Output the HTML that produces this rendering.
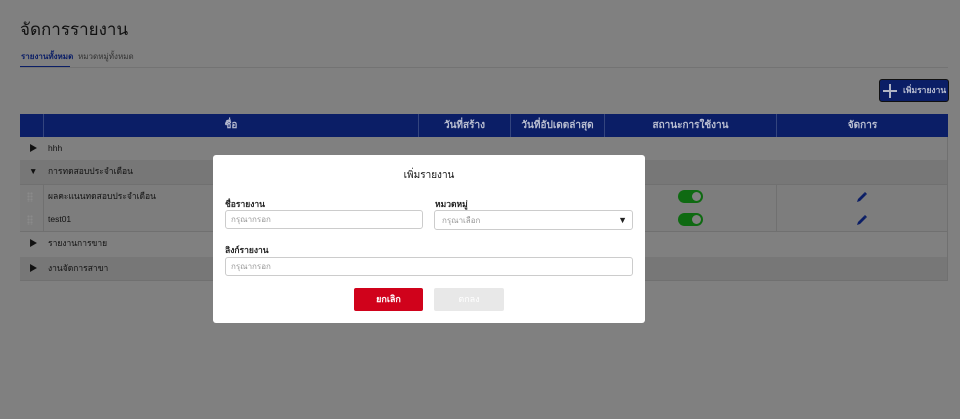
<!DOCTYPE html>
<html><head><meta charset="utf-8"><style>
*{box-sizing:border-box;margin:0;padding:0}
body{width:960px;height:419px;background:#808080;font-family:"Liberation Sans","Noto Sans CJK SC",sans-serif;position:relative;overflow:hidden;color:#111}
.a{position:absolute;white-space:nowrap}
.th{position:absolute;top:114px;height:23px;color:#b8bdd0;font-size:10px;font-weight:bold;text-align:center;line-height:23px;border-left:1px solid #34457e}
.row{position:absolute;left:20px;width:928px;font-size:8.5px;line-height:23px}
.inp{position:absolute;background:#fff;border:1px solid #ccc;border-radius:3px;font-size:8px;color:#999;padding-left:5px;line-height:18px}
.lbl{position:absolute;font-size:8.5px;font-weight:bold;color:#222}
.tog{position:absolute;width:25px;height:13px;border-radius:7px;background:#0f6a12}
.tog:after{content:"";position:absolute;right:2px;top:2px;width:9px;height:9px;border-radius:50%;background:#808080}
.dots{position:absolute;left:7px;top:7px;width:6px;height:10px;background:radial-gradient(circle,#8a8a8a 1px,transparent 1.2px) 0 0/3px 3px}
</style></head><body>
<div class="a" style="left:20px;top:16px;font-size:17px;color:#111">จัดการรายงาน</div>
<div class="a" style="left:21px;top:50px;font-size:8px;font-weight:bold;color:#0b1e66">รายงานทั้งหมด</div>
<div class="a" style="left:78px;top:50px;font-size:8px;color:#333">หมวดหมู่ทั้งหมด</div>
<div class="a" style="left:20px;top:66px;width:50px;height:2px;background:#0b1e66"></div>
<div class="a" style="left:20px;top:67px;width:928px;height:1px;background:#737373"></div>
<div class="a" style="left:879px;top:79px;width:70px;height:23px;background:#0b1e66;border:1px solid #111;border-radius:3px;color:#b8bdd0;font-size:8.5px;font-weight:bold;line-height:21px;padding-left:23px">เพิ่มรายงาน</div>
<svg class="a" style="left:882px;top:83px" width="16" height="16"><path d="M8 1v14M1 8h14" stroke="#b0b4c4" stroke-width="2"/></svg>
<div class="a" style="left:20px;top:114px;width:928px;height:23px;background:#0b1e66"></div>
<div class="th" style="left:43px;width:375px">ชื่อ</div>
<div class="th" style="left:418px;width:92px">วันที่สร้าง</div>
<div class="th" style="left:510px;width:94px">วันที่อัปเดตล่าสุด</div>
<div class="th" style="left:604px;width:172px">สถานะการใช้งาน</div>
<div class="th" style="left:776px;width:172px">จัดการ</div>
<div class="row" style="top:137px;height:23px;background:#808080"><span style="position:absolute;left:9px">▶</span><span style="position:absolute;left:28px">hhh</span></div>
<div class="row" style="top:160px;height:24px;background:#777"><span style="position:absolute;left:9px">▼</span><span style="position:absolute;left:28px">การทดสอบประจำเดือน</span></div>
<div class="row" style="top:184px;height:24px;background:#7d7d7d;border-top:1px solid #707070"><span class="dots"></span><span style="position:absolute;left:28px">ผลคะแนนทดสอบประจำเดือน</span></div>
<div class="row" style="top:208px;height:24px;background:#7d7d7d;border-bottom:1px solid #707070"><span class="dots"></span><span style="position:absolute;left:28px">test01</span></div>
<div class="a" style="left:43px;top:184px;width:1px;height:48px;background:#707070"></div>
<div class="a" style="left:776px;top:184px;width:1px;height:48px;background:#707070"></div>
<div class="tog" style="left:678px;top:190px"></div>
<div class="tog" style="left:678px;top:213px"></div>
<svg class="a" style="left:856px;top:191px" width="12" height="12"><path d="M1 11l1-3 6-6 2 2-6 6z" fill="#0b1e66"/><path d="M9 1l2 2-1 1-2-2z" fill="#0b1e66"/></svg>
<svg class="a" style="left:856px;top:214px" width="12" height="12"><path d="M1 11l1-3 6-6 2 2-6 6z" fill="#0b1e66"/><path d="M9 1l2 2-1 1-2-2z" fill="#0b1e66"/></svg>
<div class="row" style="top:232px;height:25px;background:#808080"><span style="position:absolute;left:9px">▶</span><span style="position:absolute;left:28px">รายงานการขาย</span></div>
<div class="row" style="top:257px;height:24px;background:#777;border-bottom:1px solid #707070"><span style="position:absolute;left:9px">▶</span><span style="position:absolute;left:28px">งานจัดการสาขา</span></div>
<div class="a" style="left:947px;top:137px;width:1px;height:144px;background:#707070"></div>
<div class="a" style="left:213px;top:155px;width:432px;height:168px;background:#fff;border-radius:3px"></div>
<div class="a" style="left:213px;top:168px;width:432px;text-align:center;font-size:10px">เพิ่มรายงาน</div>
<div class="lbl" style="left:225px;top:197px">ชื่อรายงาน</div>
<div class="lbl" style="left:435px;top:197px">หมวดหมู่</div>
<div class="inp" style="left:225px;top:210px;width:198px;height:19px">กรุณากรอก</div>
<div class="inp" style="left:434px;top:210px;width:199px;height:20px;padding-left:7px;line-height:19px">กรุณาเลือก<span style="position:absolute;right:5px;color:#222;font-size:9px">▼</span></div>
<div class="lbl" style="left:225px;top:243px">ลิงก์รายงาน</div>
<div class="inp" style="left:225px;top:257px;width:408px;height:19px">กรุณากรอก</div>
<div class="a" style="left:354px;top:288px;width:69px;height:23px;background:#d0021b;border-radius:2px;color:#fff;font-size:9px;font-weight:bold;text-align:center;line-height:23px">ยกเลิก</div>
<div class="a" style="left:434px;top:288px;width:70px;height:23px;background:#e8e8e8;border-radius:2px;color:#fff;font-size:9px;text-align:center;line-height:23px">ตกลง</div>
</body></html>
